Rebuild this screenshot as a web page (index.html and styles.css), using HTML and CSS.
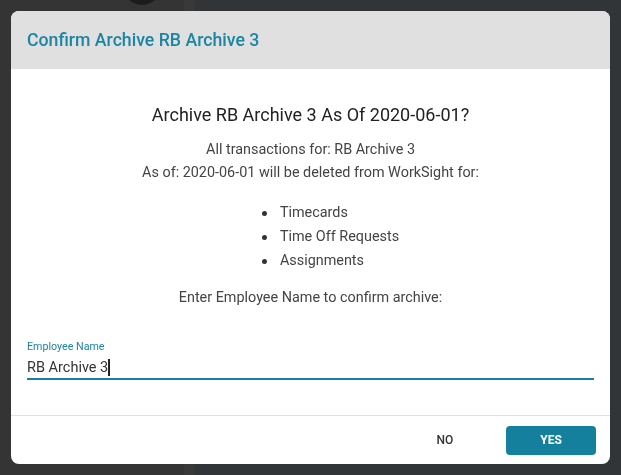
FILE: index.html
```html
<!DOCTYPE html>
<html lang="en">
<head>
    <meta charset="UTF-8">
    <meta name="viewport" content="width=device-width, initial-scale=1.0">
    <title>Confirm Archive</title>
    <link rel="stylesheet" href="styles.css">
</head>
<body>

    <div class="backdrop">
        <div class="side">
            <div class="avatar"></div>
        </div>
        <div class="side-edge"></div>
        <div class="main"></div>
    </div>

    <div class="dialog">
        <div class="dialog-header">Confirm Archive RB Archive 3</div>

        <div class="dialog-body">
            <h3 class="question">Archive RB Archive 3 As Of 2020-06-01?</h3>
            <p class="line">All transactions for: RB Archive 3</p>
            <p class="line">As of: 2020-06-01 will be deleted from WorkSight for:</p>

            <ul class="items">
                <li>Timecards</li>
                <li>Time Off Requests</li>
                <li>Assignments</li>
            </ul>

            <p class="line prompt">Enter Employee Name to confirm archive:</p>

            <div class="field">
                <label for="employeeName">Employee Name</label>
                <div class="input-row">
                    <span class="input-value">RB Archive 3</span><span class="caret"></span>
                </div>
            </div>
        </div>

        <div class="dialog-footer">
            <button class="btn btn-text">NO</button>
            <button class="btn btn-primary">YES</button>
        </div>
    </div>

</body>
</html>
```

FILE: styles.css
```css
html, body {
    margin: 0;
    height: 100%;
}
body {
    font-family: Roboto, "Noto Sans", sans-serif;
    background-color: #333;
    overflow: hidden;
}
.backdrop {
    display: flex;
    height: 100%;
}
.side {
    width: 184px;
    background-color: #343434;
    display: flex;
    justify-content: center;
}
.avatar {
    width: 38px;
    height: 38px;
    margin-top: -33px;
    margin-left: 100px;
    border-radius: 50%;
    background-color: #1c1c1c;
}
.side-edge {
    width: 11px;
    background-color: #393939;
}
.main {
    flex: 1;
    background-color: #313537;
}
.dialog {
    position: fixed;
    top: 11px;
    left: 11px;
    width: 599px;
    height: 453px;
    background: white;
    border-radius: 8px;
    overflow: hidden;
    display: flex;
    flex-direction: column;
}
.dialog-header {
    height: 58px;
    box-sizing: border-box;
    padding: 0 16px;
    background-color: #e0e0e0;
    color: #1b86a3;
    font-size: 17.7px;
    font-weight: 500;
    line-height: 58px;
}
.dialog-body {
    flex: 1;
    padding: 34px 16px 0;
    text-align: center;
    color: #444;
    font-size: 14.4px;
    border-bottom: 1px solid #e0e0e0;
}
.question {
    margin: 0 0 11px;
    font-size: 18px;
    font-weight: 400;
    line-height: 24px;
    color: #222;
}
.line {
    margin: 0;
    line-height: 23px;
}
.items {
    display: inline-block;
    margin: 17px 0 13px 40px;
    padding: 0;
    list-style: none;
    text-align: left;
    line-height: 24px;
}
.items li::before {
    content: "";
    display: inline-block;
    width: 5px;
    height: 5px;
    margin-right: 13px;
    border-radius: 50%;
    background-color: #333;
    vertical-align: middle;
}
.prompt {
    margin-bottom: 32px;
}
.field {
    text-align: left;
}
.field label {
    display: block;
    font-size: 10.7px;
    line-height: 12px;
    color: #1b86a3;
}
.input-row {
    display: flex;
    align-items: center;
    height: 22px;
    margin-top: 3px;
    border-bottom: 2px solid #1b7f9b;
    font-size: 14.5px;
    color: #333;
}
.caret {
    width: 1.5px;
    height: 17px;
    background-color: #222;
}
.dialog-footer {
    height: 48px;
    display: flex;
    justify-content: flex-end;
    align-items: center;
    gap: 16px;
    padding: 0 14px;
}
.btn {
    width: 90px;
    height: 29px;
    border: none;
    border-radius: 4px;
    font-family: inherit;
    font-size: 12px;
    font-weight: 500;
    cursor: pointer;
}
.btn-text {
    background: none;
    color: #333;
}
.btn-primary {
    background-color: #15809e;
    color: white;
    font-weight: 700;
}
```
